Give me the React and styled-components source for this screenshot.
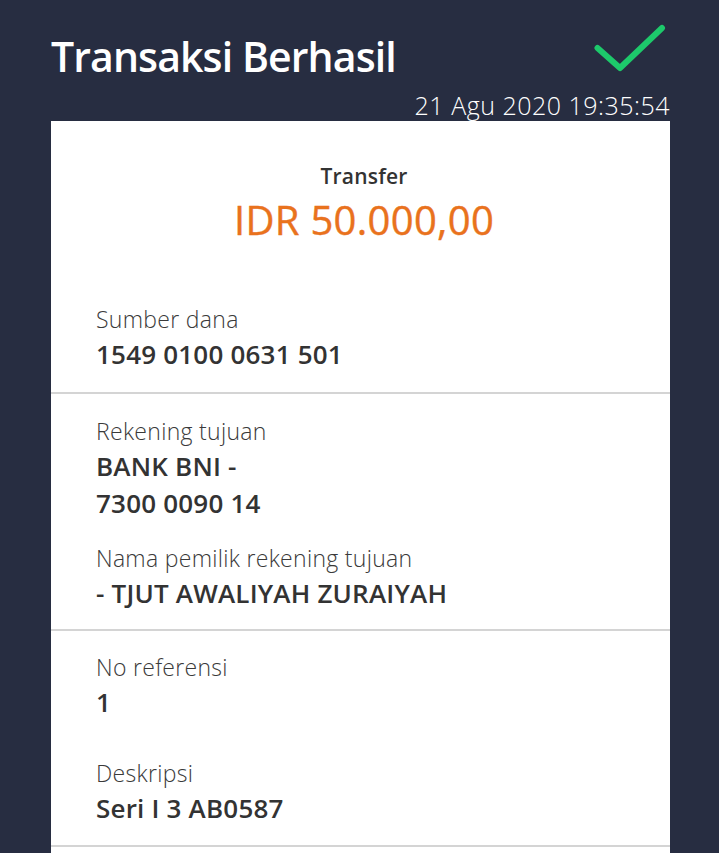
import React from "react";
import styled, { createGlobalStyle } from "styled-components";

const Global = createGlobalStyle`
  html, body { margin: 0; padding: 0; background: #272d41; }
  body { font-family: "Open Sans", "Noto Sans", sans-serif; }
`;

const Page = styled.div`
  height: 853px;
  background: #272d41;
  padding: 0 49px 0 51px;
  box-sizing: border-box;
  overflow: hidden;
`;

const Header = styled.header`
  display: grid;
  grid-template-columns: 1fr auto;
  align-items: start;
  padding-top: 22px;
`;

const Title = styled.h1`
  margin: 0;
  padding-top: 14px;
  font-size: 41px;
  font-weight: 600;
  color: #ffffff;
  line-height: 41px;
  letter-spacing: -0.9px;
`;

const Check = styled.svg`
  display: block;
  width: 72px;
  height: 52px;
  margin-right: 4px;
`;

const Stamp = styled.div`
  grid-column: 1 / -1;
  margin-top: 13px;
  text-align: right;
  color: #ffffff;
  font-size: 25px;
  font-weight: 300;
  line-height: 30px;
  letter-spacing: 0.5px;
`;

const Card = styled.main`
  background: #ffffff;
  margin-top: 1px;
  min-height: 800px;
`;

const Summary = styled.section`
  display: flex;
  flex-direction: column;
  align-items: center;
  padding: 42px 0 62px 7px;
`;

const Kind = styled.div`
  font-size: 21px;
  font-weight: 600;
  color: #333333;
  line-height: 26px;
  letter-spacing: 0.2px;
`;

const Amount = styled.div`
  margin-top: 8px;
  font-size: 40px;
  font-weight: 400;
  color: #e9721d;
  line-height: 46px;
  letter-spacing: 0.3px;
  -webkit-text-stroke: 0.4px #e9721d;
`;

const Section = styled.section`
  border-bottom: 2px solid #d4d4d4;
  padding: ${(p) => p.$top}px 45px ${(p) => p.$bottom}px;
`;

const Field = styled.div`
  margin-top: ${(p) => p.$gap || 0}px;
`;

const Label = styled.div`
  font-size: 23px;
  font-weight: 300;
  color: #3a3a3a;
  line-height: 28px;
  letter-spacing: 0.3px;
`;

const Values = styled.div`
  margin-top: 3px;
`;

const Value = styled.div`
  font-size: 26px;
  font-weight: 600;
  color: #333333;
  line-height: 37px;
  letter-spacing: 0.2px;
`;

const sections = [
  {
    top: 0,
    bottom: 19,
    fields: [{ label: "Sumber dana", values: ["1549 0100 0631 501"] }],
  },
  {
    top: 23,
    bottom: 17,
    fields: [
      { label: "Rekening tujuan", values: ["BANK BNI -", "7300 0090 14"] },
      { label: "Nama pemilik rekening tujuan", values: ["- TJUT AWALIYAH ZURAIYAH"], gap: 22 },
    ],
  },
  {
    top: 22,
    bottom: 18,
    fields: [
      { label: "No referensi", values: ["1"] },
      { label: "Deskripsi", values: ["Seri I 3 AB0587"], gap: 38 },
    ],
  },
];

export default function App() {
  return (
    <>
      <Global />
      <Page>
        <Header>
          <Title>Transaksi Berhasil</Title>
          <Check viewBox="0 0 72 52">
            <polyline
              points="3.5,26 26,46 68,6"
              fill="none"
              stroke="#1dc96b"
              strokeWidth="6"
              strokeLinecap="round"
              strokeLinejoin="round"
            />
          </Check>
          <Stamp>21 Agu 2020 19:35:54</Stamp>
        </Header>
        <Card>
          <Summary>
            <Kind>Transfer</Kind>
            <Amount>IDR 50.000,00</Amount>
          </Summary>
          {sections.map((s, i) => (
            <Section key={i} $top={s.top} $bottom={s.bottom}>
              {s.fields.map((f) => (
                <Field key={f.label} $gap={f.gap}>
                  <Label>{f.label}</Label>
                  <Values>
                    {f.values.map((v) => (
                      <Value key={v}>{v}</Value>
                    ))}
                  </Values>
                </Field>
              ))}
            </Section>
          ))}
        </Card>
      </Page>
    </>
  );
}
